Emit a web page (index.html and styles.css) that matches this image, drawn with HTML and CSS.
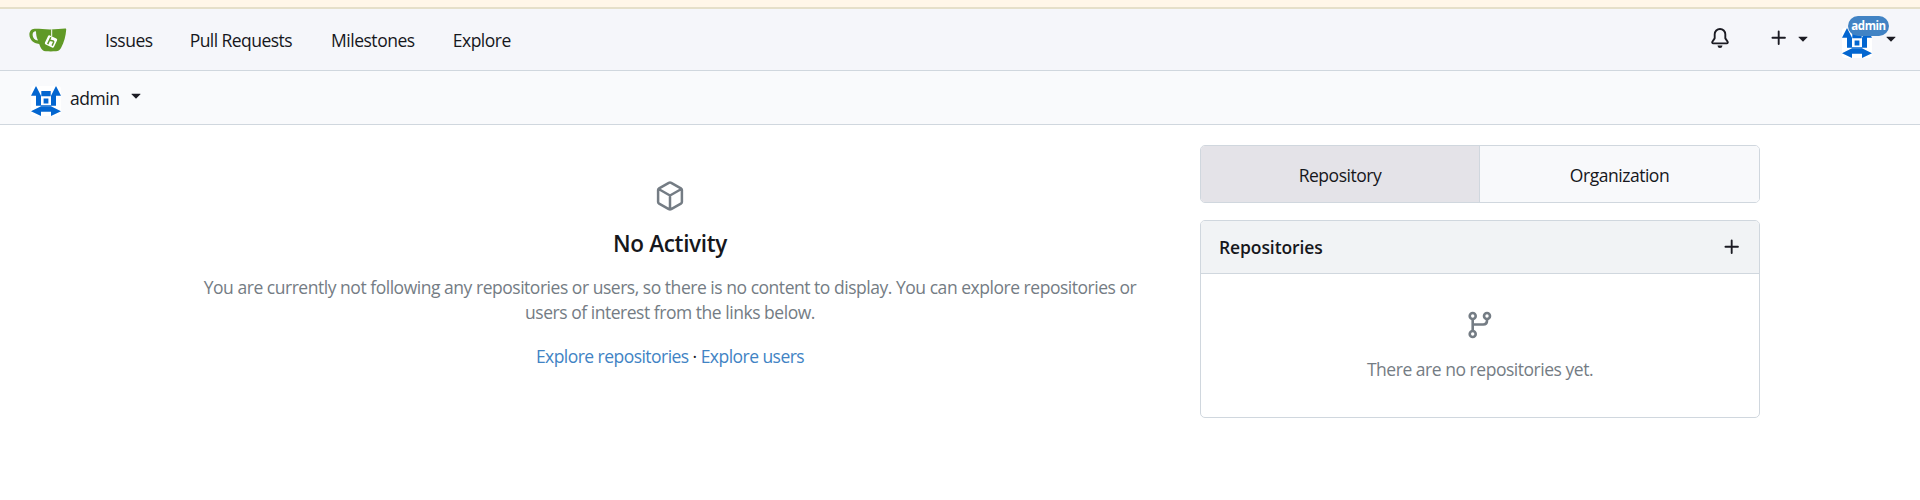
FILE: index.html
```html
<!DOCTYPE html>
<html lang="en">
<head>
<meta charset="utf-8">
<title>admin - Dashboard</title>
<link rel="stylesheet" href="styles.css">
</head>
<body>
<svg width="0" height="0" class="defs">
  <symbol id="caret" viewBox="0 0 16 16"><path d="M4.427 7.427l3.396 3.396a.25.25 0 00.354 0l3.396-3.396A.25.25 0 0011.396 7H4.604a.25.25 0 00-.177.427z"/></symbol>
  <symbol id="plus" viewBox="0 0 16 16"><path d="M7.75 2a.75.75 0 01.75.75V7h4.25a.75.75 0 110 1.5H8.5v4.25a.75.75 0 11-1.5 0V8.5H2.75a.75.75 0 010-1.5H7V2.75A.75.75 0 017.75 2z"/></symbol>
  <symbol id="avatar" viewBox="0 0 30 30">
    <path fill="#fff" d="M0 0h30v30H0z"/>
    <path fill="#0366d0" fill-rule="evenodd" d="M5 0l5 9.800v10H5v-10H0zM25 0l5 9.800h-5v10h-5v-10zM10.300 5h9.400v5.200h-9.400zM10 19.200h10v1H10z"/>
    <path fill="#0366d0" d="M12.600 12.600h4.800v4.800h-4.800zM0 25.200l10-5h10l10 5-10 4.800v-4.300H10V30z"/>
  </symbol>
</svg>
<div class="notice"></div>
<nav class="navbar">
  <div class="nav-left">
    <svg class="logo" width="38" height="24" viewBox="0 0 38 24">
      <path fill="#609926" fill-rule="evenodd" d="M5.5.7C10 .5 15 1.4 21 1.4c6 0 11-.5 15-.8 1-.1 1.3.4 1.2 1.2-.4 6-2 12.500-5.200 18.200-1.500 2.600-2.700 3.200-5 3.300-3.500.2-7 .2-10.200 0-2.700-.2-4.200-1.600-5.400-4.300L10.200 16C4 15.500.6 11.500.4 6.800.3 3.300 2.300.9 5.500.7zM7 3.300C4.500 3.300 3.500 5 3.600 7c.2 3 2 5.200 5.400 5.500C7.600 9.500 7 6.500 7 3.300z"/>
      <path stroke="#fff" stroke-width="1" d="M22.700 1.300V8"/>
      <rect x="17" y="8.500" width="10" height="10" rx="1.500" fill="#fff" transform="rotate(25 22 13.500)"/>
      <path fill="none" stroke="#609926" stroke-width="1.500" d="M21.800 9.300l-3.100 6.800M21 12.200l3 .8q1 .3.600 1.300l-1.500 3.300"/>
    </svg>
    <a class="t-issues">Issues</a><a class="t-pulls">Pull Requests</a><a class="t-miles">Milestones</a><a class="t-explore">Explore</a>
  </div>
  <div class="nav-right">
    <svg class="icon" viewBox="0 0 16 16"><path d="M8 16a2 2 0 001.985-1.750c.017-.137-.097-.25-.235-.25h-3.500c-.138 0-.252.113-.235.25A2 2 0 008 16z"/><path fill-rule="evenodd" d="M8 1.500A3.500 3.500 0 004.500 5v2.947c0 .346-.102.683-.294.970l-1.703 2.556a.018.018 0 00-.003.010l.001.006c0 .002.002.004.004.006a.017.017 0 00.006.004l.007.001h10.964l.007-.001a.016.016 0 00.006-.004.016.016 0 00.004-.006l.001-.007a.017.017 0 00-.003-.010l-1.703-2.554a1.750 1.750 0 01-.294-.970V5A3.500 3.500 0 008 1.500zM3 5a5 5 0 0110 0v2.947c0 .050.015.098.042.139l1.703 2.555A1.518 1.518 0 0113.482 13H2.518a1.518 1.518 0 01-1.263-2.360l1.703-2.554A.250.250 0 003 7.947V5z"/></svg>
    <div class="create"><svg class="icon"><use href="#plus"/></svg><svg class="icon"><use href="#caret"/></svg></div>
    <div class="profile"><svg class="avatar"><use href="#avatar"/></svg><span class="badge">admin</span><svg class="icon"><use href="#caret"/></svg></div>
  </div>
</nav>
<div class="context">
  <svg class="avatar"><use href="#avatar"/></svg><span class="context-name">admin</span><svg class="icon context-caret"><use href="#caret"/></svg>
</div>
<main class="dashboard">
  <section class="feed">
    <svg class="cube" width="32" height="32" viewBox="0 0 32 32" fill="none" stroke="#747c84" stroke-width="2.500" stroke-linejoin="round"><path d="M14.800 2.800q1.200-.6 2.400 0l9.700 5.500q1 .6 1 1.700v12q0 1.100-1 1.700l-9.700 5.500q-1.200.6-2.400 0l-9.700-5.500q-1-.6-1-1.700V10q0-1.100 1-1.700zM4.600 9L16 15.500 27.400 9M16 15.500V29"/></svg>
    <h2>No Activity</h2>
    <p>You are currently not following any repositories or users, so there is no content to display. You can explore repositories or<br>users of interest from the links below.</p>
    <div class="links"><a>Explore repositories</a> · <a>Explore users</a></div>
  </section>
  <aside class="side">
    <div class="tabs"><a class="tab active">Repository</a><a class="tab tab-org">Organization</a></div>
    <div class="panel">
      <div class="panel-head"><h4>Repositories</h4><svg class="icon"><use href="#plus"/></svg></div>
      <div class="panel-body">
        <svg class="branch" width="32" height="32" viewBox="0 0 32 32" fill="none" stroke="#747c84" stroke-width="2.600"><circle cx="8.700" cy="7" r="3"/><circle cx="23" cy="7" r="3"/><circle cx="8.700" cy="25" r="3"/><path d="M8.700 10v12M8.700 15.500h10.600q3.700 0 3.700-3.700V10"/></svg>
        <p>There are no repositories yet.</p>
      </div>
    </div>
  </aside>
</main>
</body>
</html>
```
FILE: styles.css
```css
* { box-sizing: border-box; }
body { margin: 0; background: #fff; color: #16171c; font: 17.5px/25px "Open Sans", "Noto Sans", sans-serif; letter-spacing: -0.47px; }
h2, h4, p { margin: 0; }
a { white-space: nowrap; }
svg { display: block; flex: none; }
.defs { position: absolute; }
.icon { width: 20px; height: 20px; fill: #1b1b23; }
.avatar { width: 30px; height: 30px; border-radius: 3px; }
.notice { height: 9px; background: #fff6e8; border-bottom: 2px solid #e5dfc9; }
.navbar { display: flex; justify-content: space-between; height: 62px; padding: 0 19px 0 29px; background: #f5f6fa; border-bottom: 1px solid #d0d7de; }
.nav-left { display: flex; align-items: flex-start; padding-top: 19px; }
.nav-left a { margin-right: 38px; }
.nav-left .t-issues { margin-right: 37px; }
.nav-left .t-pulls { margin-right: 39px; letter-spacing: -0.55px; }
.logo { margin-right: 38px; }
.nav-right { display: flex; align-items: flex-start; padding-top: 19px; }
.create { display: flex; gap: 4px; margin-left: 39px; }
.profile { display: flex; position: relative; gap: 9px; margin-left: 29px; }
.badge { position: absolute; left: 6px; top: -12px; width: 41px; height: 20px; border-radius: 10px; background: #4183c4; color: #fff; font-size: 11.5px; font-weight: 700; line-height: 20px; text-align: center; letter-spacing: -0.45px; }
.context { display: flex; align-items: flex-start; height: 54px; padding: 15px 31px 0; background: #f9fafc; border-bottom: 1px solid #d0d7de; }
.context-name { margin: 0 0 0 9px; }
.context-caret { margin: -1px 0 0 7px; }
.dashboard { display: flex; gap: 40px; padding: 20px 160px 0 180px; }
.feed { display: flex; flex-direction: column; align-items: center; width: 980px; padding-top: 35px; text-align: center; color: #747c84; }
.feed h2 { margin-top: 17px; color: #16171c; font-size: 22.5px; font-weight: 600; line-height: 30px; letter-spacing: -0.35px; }
.feed p { margin-top: 16px; }
.links { margin-top: 19px; color: #16171c; letter-spacing: -0.54px; }
.links a { color: #4183c4; }
.side { width: 560px; }
.tabs { display: flex; height: 58px; border: 1px solid #d0d7de; border-radius: 5px; overflow: hidden; }
.tab { width: 279px; padding-top: 17px; text-align: center; background: #f8f9fb; }
.active { background: #e4e3e8; border-right: 1px solid #d0d7de; }
.panel { margin-top: 17px; height: 198px; border: 1px solid #d0d7de; border-radius: 5px; overflow: hidden; }
.panel-head { display: flex; justify-content: space-between; align-items: center; height: 53px; padding: 0 17px 0 18px; background: #f1f3f5; border-bottom: 1px solid #d0d7de; }
.panel-head h4 { font-size: 17.5px; font-weight: 600; letter-spacing: -0.1px; }
.panel-body { display: flex; flex-direction: column; align-items: center; padding-top: 35px; color: #747c84; }
.panel-body p { margin-top: 16px; }
```
